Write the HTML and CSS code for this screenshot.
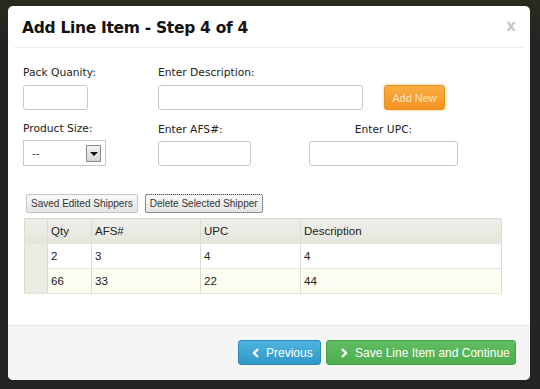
FILE: index.html
```html
<!DOCTYPE html>
<html lang="en">
<head>
    <meta charset="UTF-8">
    <title>Add Line Item</title>
    <link rel="stylesheet" href="styles.css">
</head>
<body>
    <div class="modal">
        <header class="modal-header">
            <h1>Add Line Item - Step 4 of 4</h1>
            <span class="close">x</span>
        </header>

        <main class="modal-body">
            <div class="form-row">
                <div class="field field-qty">
                    <label>Pack Quanity:</label>
                    <input type="text" class="input-qty">
                </div>
                <div class="field field-desc">
                    <label>Enter Description:</label>
                    <input type="text" class="input-desc">
                </div>
                <button class="btn-add">Add New</button>
            </div>

            <div class="form-row row-two">
                <div class="field field-size">
                    <label>Product Size:</label>
                    <div class="fake-select">
                        <span>--</span>
                        <span class="arrow"></span>
                    </div>
                </div>
                <div class="field field-afs">
                    <label>Enter AFS#:</label>
                    <input type="text" class="input-afs">
                </div>
                <div class="field field-upc">
                    <label>Enter UPC:</label>
                    <input type="text" class="input-upc">
                </div>
            </div>

            <div class="grid-tools">
                <button class="btn-grid">Saved Edited Shippers</button>
                <button class="btn-grid focused">Delete Selected Shipper</button>
            </div>

            <table class="grid">
                <thead>
                    <tr>
                        <th class="rn"></th>
                        <th class="c-qty">Qty</th>
                        <th class="c-afs">AFS#</th>
                        <th class="c-upc">UPC</th>
                        <th>Description</th>
                    </tr>
                </thead>
                <tbody>
                    <tr>
                        <td class="rn"></td>
                        <td>2</td>
                        <td>3</td>
                        <td>4</td>
                        <td>4</td>
                    </tr>
                    <tr class="alt">
                        <td class="rn"></td>
                        <td>66</td>
                        <td>33</td>
                        <td>22</td>
                        <td>44</td>
                    </tr>
                </tbody>
            </table>
        </main>

        <footer class="modal-footer">
            <button class="btn btn-prev">
                <svg width="9" height="10" viewBox="0 0 9 10"><path d="M7 1 L3 5 L7 9" fill="none" stroke="#fff" stroke-width="2.4"/></svg>
                Previous
            </button>
            <button class="btn btn-save">
                <svg width="9" height="10" viewBox="0 0 9 10"><path d="M2 1 L6 5 L2 9" fill="none" stroke="#fff" stroke-width="2.4"/></svg>
                Save Line Item and Continue
            </button>
        </footer>
    </div>
</body>
</html>
```

FILE: styles.css
```css
* {
    margin: 0;
    padding: 0;
    box-sizing: border-box;
}

body {
    background: linear-gradient(#2a2a1d, #242424 40px);
    height: 389px;
    padding: 6px 10px 9px 8px;
    font-family: 'DejaVu Sans', Verdana, sans-serif;
    overflow: hidden;
}

.modal {
    width: 522px;
    height: 374px;
    background: #fff;
    border-radius: 5px;
    display: flex;
    flex-direction: column;
    overflow: hidden;
}

.modal-header {
    height: 42px;
    margin: 0 6px 0 6px;
    padding: 0 8px 0 8px;
    border-bottom: 1px solid #eeeeee;
    display: flex;
    align-items: center;
    justify-content: space-between;
}

.modal-header h1 {
    font-size: 15.5px;
    font-weight: bold;
    color: #111;
    letter-spacing: -0.3px;
    margin-top: 2px;
}

.close {
    color: #c8c8c8;
    font-size: 15px;
    font-weight: bold;
    margin-top: -2px;
}

.modal-body {
    flex: 1;
    padding: 17px 15px 0 15px;
}

.form-row {
    display: flex;
    align-items: flex-end;
}

.row-two {
    margin-top: 11px;
}

.field {
    display: flex;
    flex-direction: column;
}

.field label {
    font-size: 10.7px;
    color: #222;
    line-height: 16px;
    margin-bottom: 4px;
}

.row-two .field label {
    margin-bottom: 3px;
}

input {
    height: 25px;
    border: 1px solid #c9c9c9;
    border-radius: 3px;
    background: #fff;
}

.field-qty { width: 135px; }
.input-qty { width: 65px; }

.field-desc { width: 226px; }
.input-desc { width: 205px; }

.btn-add {
    width: 61px;
    height: 25px;
    border: 1px solid #e8901a;
    border-radius: 3px;
    background: linear-gradient(#f9ad45, #f39320);
    box-shadow: 0 0 3px rgba(245, 170, 60, 0.7);
    color: #fde4c0;
    font-family: 'Liberation Sans', Arial, sans-serif;
    font-size: 11px;
}

.field-size { width: 135px; }

.fake-select {
    width: 83px;
    height: 26px;
    border: 1px solid #c9c9c9;
    display: flex;
    align-items: center;
    justify-content: space-between;
    padding: 0 4px 0 8px;
    font-family: 'Liberation Sans', Arial, sans-serif;
    font-size: 11px;
    color: #444;
}

.arrow {
    width: 15px;
    height: 17px;
    border: 1px solid #8a8a8a;
    background: linear-gradient(#f2f2f2, #d6d6d6);
    position: relative;
}

.arrow::after {
    content: "";
    position: absolute;
    left: 3px;
    top: 6px;
    border-left: 4px solid transparent;
    border-right: 4px solid transparent;
    border-top: 4px solid #111;
}

.field-afs { width: 151px; }
.input-afs { width: 93px; }

.field-upc {
    width: 149px;
    align-items: center;
}
.input-upc { width: 149px; }

.grid-tools {
    margin-top: 28px;
    padding-left: 3px;
    display: flex;
    gap: 7px;
}

.btn-grid {
    height: 19px;
    padding: 0 4px;
    border: 1px solid #c6c6c6;
    border-radius: 2px;
    background: linear-gradient(#fafafa, #e4e4e4);
    font-family: 'Liberation Sans', Arial, sans-serif;
    font-size: 10px;
    color: #333;
    white-space: nowrap;
}

.btn-grid.focused {
    outline: 1px dotted #555;
    outline-offset: -1px;
}

.grid {
    margin-top: 5px;
    margin-left: 1px;
    width: 478px;
    border-collapse: collapse;
    font-family: 'Liberation Sans', Arial, sans-serif;
    font-size: 11.5px;
    color: #222;
    border: 1px solid #dcdcd5;
}

.grid th,
.grid td {
    height: 25px;
    text-align: left;
    font-weight: normal;
    padding: 0 3px;
    border-right: 1px solid #dcdcd5;
    border-bottom: 1px solid #e6e6df;
}

.grid th {
    background: linear-gradient(#efeee8, #e6e5dd);
}

.grid td {
    background: #fff;
}

.grid tr.alt td {
    background: #fcfcf1;
}

.grid .rn {
    width: 23px;
    background: linear-gradient(#efeee8, #e6e5dd);
}

.grid tr.alt td.rn,
.grid td.rn {
    background: #ecebe4;
}

.grid .c-qty { width: 44px; }
.grid .c-afs { width: 109px; }
.grid .c-upc { width: 100px; }

.modal-footer {
    height: 55px;
    background: #f5f5f5;
    border-top: 1px solid #e5e5e5;
    display: flex;
    justify-content: flex-end;
    align-items: flex-start;
    padding: 14px 14px 0 0;
    gap: 5px;
}

.btn {
    height: 25px;
    border-radius: 3px;
    color: #fff;
    font-family: 'Liberation Sans', Arial, sans-serif;
    font-size: 12px;
    display: flex;
    align-items: center;
    gap: 6px;
    white-space: nowrap;
}

.btn-prev {
    width: 83px;
    padding-left: 12px;
    background: linear-gradient(#4cb4dc, #2f98c7);
    border: 1px solid #2a8ab5;
}

.btn-save {
    width: 190px;
    padding-left: 13px;
    background: linear-gradient(#62bc62, #4fae4f);
    border: 1px solid #43a043;
}
```
